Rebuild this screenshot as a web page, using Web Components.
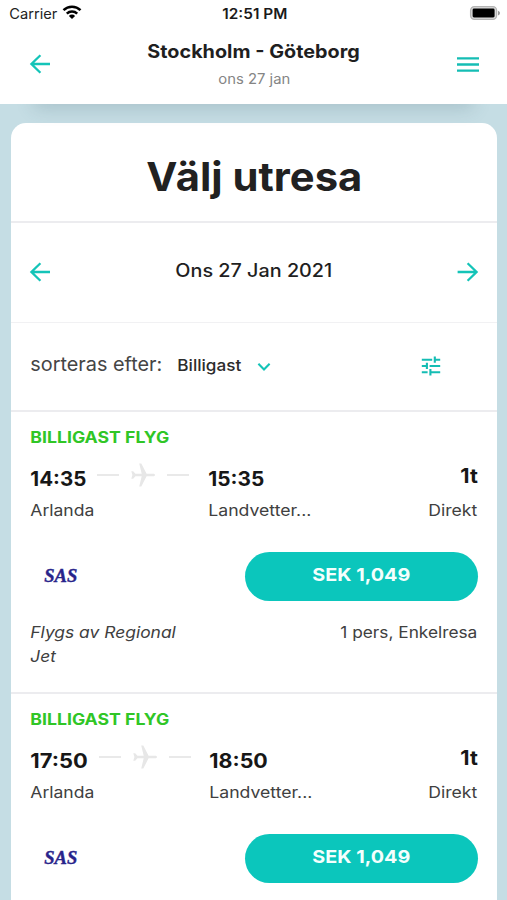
<!DOCTYPE html>
<html lang="sv">
<head>
<meta charset="utf-8">
<title>Välj utresa</title>
<style>
html,body{margin:0;height:900px;overflow:hidden}
body{background:#c5dde4;font-family:Inter,"Liberation Sans",sans-serif;color:#1f1f1f}
</style>
</head>
<body>
<flight-app></flight-app>
<script>
const define=(name,html,init)=>customElements.define(name,class extends HTMLElement{
  connectedCallback(){
    if(this.shadowRoot)return;
    const t=document.createElement('template');
    t.innerHTML=typeof html==='function'?html(this):html;
    this.attachShadow({mode:'open'}).append(t.content.cloneNode(true));
    if(init)init(this);
  }
});

const fit=el=>{
  const w=parseFloat(el.getAttribute('width'));
  const span=el.shadowRoot.querySelector('span');
  span.style.transform='none';
  const now=span.getBoundingClientRect().width;
  if(w&&now){
    el.style.width=w+'px';
    span.style.transform=`translateX(.3px) scaleX(${(w-1)/now})`;
  }
};
define('fit-text','<style>:host{display:block;white-space:nowrap;line-height:24px}span{display:inline-block;transform-origin:0 50%}</style><span><slot></slot></span>',fit);

const icons={
  back:[22,20,'<path d="M21 10H2M11.4 1.2 2.4 10l9 8.8" fill="none" stroke="#14c4b8" stroke-width="2.3"/>'],
  forward:[22,20,'<path d="M.6 10h19M10.6 1.2l9 8.8-9 8.8" fill="none" stroke="#14c4b8" stroke-width="2.3"/>'],
  menu:[22,16,'<path d="M0 2.4h22M0 8.5h22M0 14.6h22" stroke="#14bdb4" stroke-width="2.4"/>'],
  chevron:[14,10,'<path d="M1.4 1.8 7 7.4l5.6-5.6" fill="none" stroke="#14c4b8" stroke-width="2.1"/>'],
  tune:[20,20,'<path d="M.8 3.8h10.4M13.8 3.8h5.4M13.8.6v6.2M.8 10h4.6M5.9 6.8v6.2M8.6 10h10.6M.8 16.2h5.8M9.4 16.2h9.8M9.4 13v6.4" stroke="#14bdb4" stroke-width="2.1"/>'],
  wifi:[20,15,'<g fill="none" stroke="#000" stroke-width="2.5"><path d="M1.5 5.1a12.2 12.2 0 0 1 17 0"/><path d="M4.8 8.6a7.5 7.5 0 0 1 10.4 0"/></g><path d="M10 14 6.9 10.9a4.4 4.4 0 0 1 6.2 0Z"/>'],
  battery:[32,16,'<rect x="1.6" y="1.6" width="26" height="12.8" rx="3.8" fill="#dcdcdc" stroke="#b4b4b4" stroke-width="1.3"/><rect x="3.6" y="3.6" width="22" height="8.8" rx="1.4" fill="#000"/><path d="M29 5.7q2 .8 2 2.4t-2 2.4z" fill="#999"/>'],
  plane:[26,26,'<path fill="#e7e7e7" d="M25 13c0 .9-.9 1.3-2 1.3h-6.4L11.3 24.5H9.2l2.5-10.2H5.4L3.2 16.8H1.3L2.4 13 1.3 9.2h1.9l2.2 2.5h6.3L9.2 1.5h2.1l5.3 10.2H23c1.1 0 2 .4 2 1.3z"/>']
};
define('ui-icon',el=>{
  const [w,h,body]=icons[el.getAttribute('name')];
  return `<style>:host{display:block;flex:none;width:${w}px;height:${h}px}svg{display:block}</style><svg width="${w}" height="${h}" viewBox="0 0 ${w} ${h}">${body}</svg>`;
});

define('status-bar',`<style>
:host{display:grid;grid-template-columns:1fr auto 1fr;height:28px;padding:2px 6px 0 8.5px;box-sizing:border-box;font-size:14px;color:#222}
.l{display:flex;gap:4.5px}.l ui-icon{margin-top:3px}
.c{font-weight:600;color:#1a1a1a}
ui-icon[name=battery]{justify-self:end;margin-top:3px}
</style>
<div class="l"><fit-text width="49">Carrier</fit-text><ui-icon name="wifi"></ui-icon></div>
<fit-text class="c" width="66">12:51 PM</fit-text>
<ui-icon name="battery"></ui-icon>`);

define('nav-bar',`<style>
:host{display:flex;justify-content:space-between;height:76px;padding:0 28px 0 29px;box-sizing:border-box}
ui-icon[name=back]{margin-top:26px}ui-icon[name=menu]{margin-top:28px}
.m{display:flex;flex-direction:column;align-items:center;padding-top:11px}
.t{font-size:18.5px;font-weight:650}.s{font-size:14px;color:#858585;margin-top:4px}
</style>
<ui-icon name="back"></ui-icon>
<div class="m"><fit-text class="t" width="213.5">Stockholm - Göteborg</fit-text><fit-text class="s" width="73">ons 27 jan</fit-text></div>
<ui-icon name="menu"></ui-icon>`);

define('app-header',`<style>
:host{display:block;position:relative;height:104px}
.bg{position:relative;height:104px;background:#fff}
:host::before{content:"";position:absolute;left:34px;right:34px;top:84px;height:20px;box-shadow:0 4px 18px rgba(60,90,105,.22)}
</style><div class="bg"><status-bar></status-bar><nav-bar></nav-bar></div>`);

define('date-picker',`<style>
:host{display:flex;justify-content:space-between;height:100px;padding:0 18px;box-sizing:border-box;border-bottom:1.5px solid #f1f1f3}
ui-icon{margin-top:39px}.d{margin-top:35px;font-size:18.3px;font-weight:550}
</style><ui-icon name="back"></ui-icon><fit-text class="d" width="158"><slot></slot></fit-text><ui-icon name="forward"></ui-icon>`);

define('sort-bar',`<style>
:host{display:flex;height:89px;padding:0 56px 0 19px;box-sizing:border-box;border-bottom:2px solid #ececef}
.a{margin-top:30px;font-size:19px;color:#454545}
.b{margin:30px 0 0 14px;font-size:16.3px;font-weight:500;color:#2c2c2c}
ui-icon[name=chevron]{margin:39px 0 0 15px}ui-icon[name=tune]{margin:33px 0 0 auto}
</style><fit-text class="a" width="133">sorteras efter:</fit-text><fit-text class="b" width="65">Billigast</fit-text><ui-icon name="chevron"></ui-icon><ui-icon name="tune"></ui-icon>`);

define('price-button',`<style>:host{display:block}
button{all:unset;display:flex;justify-content:center;box-sizing:border-box;width:233px;height:49px;padding-top:11px;border-radius:25px;background:#0bc6bc;color:#f4fffd;font-size:18px;font-weight:700}
</style><button><fit-text width="99">SEK 1,049</fit-text></button>`);

define('airline-logo',`<style>:host{display:block;width:60px}
fit-text{font:italic 700 18px/24px "Liberation Serif",serif;color:#28248b;-webkit-text-stroke:.4px #28248b}</style><fit-text width="34"><slot></slot></fit-text>`);

define('flight-card',el=>{
  const a=n=>el.getAttribute(n);
  return `<style>
:host{display:block;height:282px;padding:0 19px;box-sizing:border-box;border-bottom:2px solid #ececef;font-size:16px;color:#404040}
.tag{padding-top:14px;font-size:15.8px;font-weight:700;color:#30c626}
.route{display:flex;height:70px;margin-top:17px}
.time{font-size:20.2px;font-weight:700;color:#171717}
.place{margin-top:7px}
.link{display:flex;align-items:center;height:26px;margin:-5px 18.5px 0 10px}
i{display:block;width:22px;height:2px;background:#e9e9e9}.link ui-icon{margin:0 11px}
.dur{margin-left:auto;display:flex;flex-direction:column;align-items:flex-end}
.dur .time{margin-top:-3px}.dur .place{margin-top:10px}
.dep{width:${a('dw')}px}
.buy{display:flex;justify-content:space-between;height:49px;margin-top:15px}
airline-logo{margin:12px 0 0 14px}
.info{display:flex;justify-content:space-between;margin-top:19px}
.op{font-style:italic}
</style>
<fit-text class="tag" width="140">BILLIGAST FLYG</fit-text>
<div class="route">
<div class="dep"><fit-text class="time" width="${a('dw')}">${a('dep')}</fit-text><fit-text class="place" width="65">Arlanda</fit-text></div>
<div class="link"><i></i><ui-icon name="plane"></ui-icon><i></i></div>
<div><fit-text class="time" width="${a('aw')}">${a('arr')}</fit-text><fit-text class="place" width="104">Landvetter...</fit-text></div>
<div class="dur"><fit-text class="time" width="18.5">1t</fit-text><fit-text class="place" width="50">Direkt</fit-text></div>
</div>
<div class="buy"><airline-logo>SAS</airline-logo><price-button></price-button></div>
${el.hasAttribute('operator')?`<div class="info"><div class="op"><fit-text width="146.5">${a('operator')}</fit-text><fit-text width="26.5">Jet</fit-text></div><fit-text width="138">1 pers, Enkelresa</fit-text></div>`:''}`;
});

define('results-panel',`<style>
:host{display:block;margin:19px 10px 0 11px;height:790px;background:#fff;border-radius:15px 15px 0 0}
.h{display:flex;justify-content:center;height:100px;padding-top:42px;box-sizing:border-box;border-bottom:2px solid #ececef;font-size:39.5px;font-weight:700;color:#212121}
</style><div class="h"><fit-text width="217"><slot name="title"></slot></fit-text></div><slot></slot>`);

define('flight-app',`<style>:host{display:block;height:900px;overflow:hidden}</style>
<app-header></app-header>
<results-panel><span slot="title">Välj utresa</span><date-picker>Ons 27 Jan 2021</date-picker><sort-bar></sort-bar><flight-card dep="14:35" arr="15:35" dw="57" aw="57" operator="Flygs av Regional"></flight-card><flight-card dep="17:50" arr="18:50" dw="58.5" aw="59.5"></flight-card></results-panel>`);

// Slotted labels are measured again once the whole tree is in place.
const refit=root=>root.querySelectorAll('*').forEach(e=>{
  if(e.shadowRoot)refit(e.shadowRoot);
  if(e.localName==='fit-text')fit(e);
});
refit(document);
</script>
</body>
</html>
